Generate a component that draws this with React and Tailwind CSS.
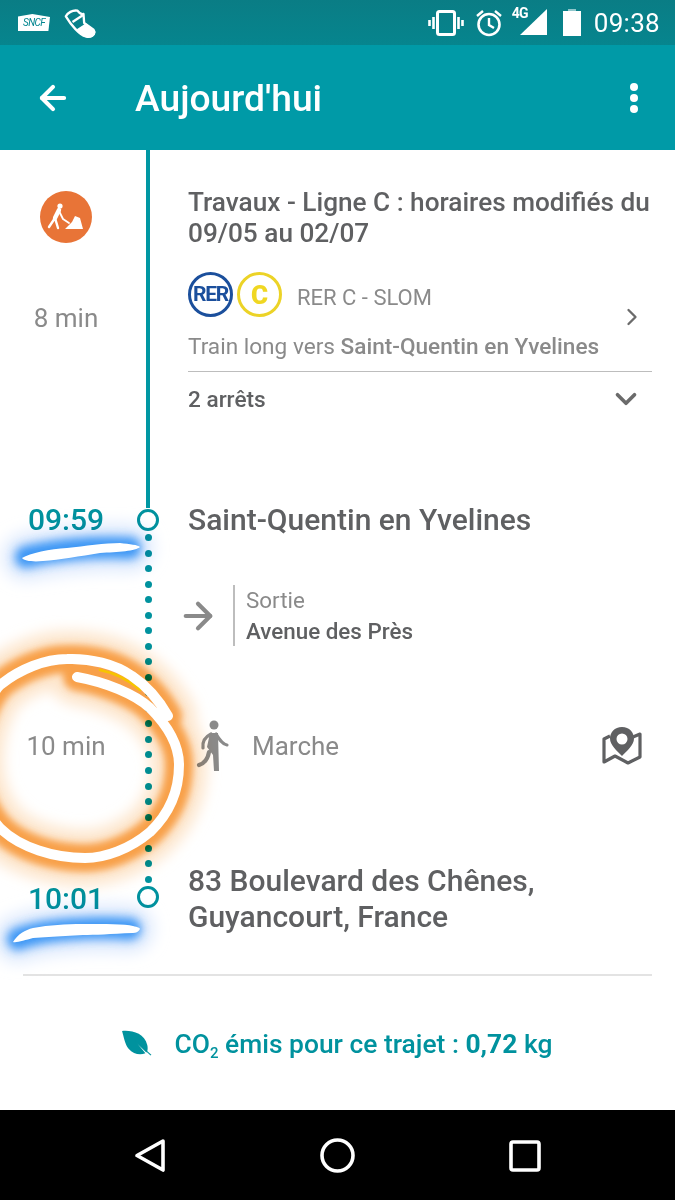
import { ArrowLeft, ArrowRight, ChevronDown, ChevronRight } from 'lucide-react';

const font = { fontFamily: 'Roboto, sans-serif' };

const ringPath = 'M77 677 C105 682 135 694 150 708 C168 726 179 745 179 765 C179 790 170 813 150 832 C130 849 105 858 85 858 C55 858 20 848 0 828 C-18 808 -25 785 -25 760 C-25 730 -15 702 0 685 C20 669 45 659 67 659 C90 658 115 664 132 676 C150 688 160 702 168 716';

const StatusIcons = () => (
  <div className="flex items-center">
    <svg width="36" height="28" viewBox="0 0 36 28" fill="none" className="mr-[11px]">
      <rect x="9.5" y="2.5" width="17" height="23" rx="2" stroke="white" strokeWidth="3" />
      <path d="M5.5 8v12M1.5 11v6M30.5 8v12M34.5 11v6" stroke="white" strokeWidth="2.6" />
    </svg>
    <svg width="28" height="28" viewBox="0 0 28 28" fill="none" className="mr-[11px]">
      <circle cx="14" cy="15.5" r="10.5" stroke="white" strokeWidth="2.6" />
      <path d="M14 9v7l5 3M2 7l6-5M26 7l-6-5" stroke="white" strokeWidth="2.4" />
    </svg>
    <div className="relative w-[34px] h-[28px] mr-[15px]">
      <svg width="34" height="28" viewBox="0 0 34 28" className="absolute left-[6px] top-0">
        <path d="M0 26 L27 0 V26 Z" fill="white" />
      </svg>
      <span className="absolute -left-[2px] -top-[3px] text-white text-[14px] font-bold leading-[14px] tracking-[-0.8px]">4G</span>
    </div>
    <svg width="18" height="27" viewBox="0 0 18 27" className="mr-[13px]">
      <rect x="5" y="0" width="8" height="3" fill="#8fc6cb" />
      <rect x="0" y="2" width="18" height="25" fill="white" />
    </svg>
    <span className="text-white text-[26px] leading-none tracking-[0.3px]">09:38</span>
  </div>
);

const LeftIcons = () => (
  <div className="flex items-center">
    <div className="relative w-[32px] h-[17px] bg-white mr-[14px] [clip-path:polygon(0_15%,45%_0,100%_18%,95%_100%,0_100%)] flex items-center justify-center">
      <span className="text-[#00858f] text-[10px] italic leading-none tracking-[-0.6px]">SNCF</span>
    </div>
    <svg width="32" height="30" viewBox="190 20 95 90" fill="none" stroke="white" strokeWidth="7" strokeLinejoin="round">
      <path d="M195 45 C200 35 215 25 230 28 C235 35 240 40 248 38 L250 65 L278 85 C285 100 270 110 255 105 C235 100 210 70 195 45 Z" />
      <path d="M215 62 L248 40" />
      <path d="M232 85 L255 70 L280 90 C283 100 270 108 255 104 Z" fill="white" />
    </svg>
  </div>
);

const WorkerBadge = () => (
  <div className="w-[52px] h-[52px] rounded-full bg-[#e87437]">
    <svg width="52" height="52" viewBox="0 0 52 52" fill="none" stroke="white" strokeLinecap="round" strokeLinejoin="round">
      <circle cx="20" cy="15" r="2.6" fill="white" stroke="none" />
      <path d="M19 19 L15 27" strokeWidth="4.4" />
      <path d="M15 27 L9 36 M15 27 L18 37" strokeWidth="2.4" />
      <path d="M19 20 L23 28 L29 32" strokeWidth="1.8" />
      <path d="M25 38 L32 31 L35 25 L40 27 L43 38 Z" fill="white" stroke="none" />
    </svg>
  </div>
);

const LineBadges = () => (
  <div className="flex items-center gap-[4px]">
    <div className="w-[45px] h-[45px] rounded-full border-[3px] border-[#1b4f9c] flex items-center justify-center">
      <span className="text-[#1b4f9c] text-[21px] font-bold leading-none tracking-[-1.2px]">RER</span>
    </div>
    <div className="w-[45px] h-[45px] rounded-full border-[3px] border-[#ecd327] flex items-center justify-center">
      <span className="text-[#f0d722] text-[26px] font-black leading-none">C</span>
    </div>
  </div>
);

const WalkIcon = () => (
  <svg width="34" height="54" viewBox="0 0 34 54" fill="none" stroke="#8a8a8a" strokeLinecap="round" strokeLinejoin="round">
    <circle cx="18" cy="6" r="4.5" fill="#8a8a8a" stroke="none" />
    <path d="M14 14 L22 14 L23 52 L18 52 L17 36 L11 28 Z" fill="#8a8a8a" stroke="none" />
    <path d="M15 15 C9 18 6 22 7 29" strokeWidth="3.2" />
    <path d="M20 15 C23 20 26 25 31 26" strokeWidth="3.2" />
    <path d="M13 33 C12 39 9 44 3 46" strokeWidth="4.2" />
  </svg>
);

const MapPinIcon = () => (
  <svg width="40" height="38" viewBox="0 0 40 38" fill="none">
    <path d="M8 9 L2 12 V35 L13 29 L26 36 L38 30 V7 L31 10" stroke="#5f6062" strokeWidth="3.2" strokeLinejoin="round" />
    <path fillRule="evenodd" clipRule="evenodd" d="M20 0 C12.5 0 8 5.5 8 11.5 C8 18 15 24 20 29 C25 24 32 18 32 11.5 C32 5.5 27.5 0 20 0 Z M20 6.5 A5.5 5.5 0 1 0 20 17.5 A5.5 5.5 0 1 0 20 6.5 Z" fill="#5f6062" />
  </svg>
);

const LeafIcon = () => (
  <svg width="30" height="28" viewBox="0 0 32 30">
    <path d="M0 1 C10 0 24 3 27 16 C28 21 27 23 26 24 L16 14 L25 25 C19 27 12 26 7 20 C3 15 2 8 0 1 Z" fill="#00929e" />
    <path d="M14 12 L31 27" stroke="#00929e" strokeWidth="1.2" />
  </svg>
);

const Scribbles = () => (
  <svg width="675" height="1200" viewBox="0 0 675 1200" fill="none" className="absolute left-0 top-0 pointer-events-none">
    <defs>
      <filter id="blurWide" filterUnits="userSpaceOnUse" x="-100" y="400" width="500" height="700"><feGaussianBlur stdDeviation="7" /></filter>
      <filter id="blurNarrow" filterUnits="userSpaceOnUse" x="-100" y="400" width="500" height="700"><feGaussianBlur stdDeviation="3.5" /></filter>
      <filter id="blueWide" filterUnits="userSpaceOnUse" x="-100" y="400" width="500" height="700"><feGaussianBlur stdDeviation="8" /></filter>
      <filter id="blueNarrow" filterUnits="userSpaceOnUse" x="-100" y="400" width="500" height="700"><feGaussianBlur stdDeviation="5" /></filter>
    </defs>

    {/* underline 09:59 */}
    <g className="mix-blend-multiply">
      <path d="M26 557 C50 551 90 546 130 548" stroke="#dbe8fd" strokeWidth="46" strokeLinecap="round" filter="url(#blueWide)" />
      <path d="M26 557 C50 551 90 546 130 548" stroke="#3d97f5" strokeWidth="22" strokeLinecap="round" filter="url(#blueNarrow)" />
    </g>
    <path d="M22 558 C30 553 50 549 67 548 C85 546 105 543 120 543 C130 544 138 545 140 547 C136 551 118 552 100 553 C80 556 60 560 43 561 C33 562 24 561 22 558 Z" fill="white" />

    {/* underline 10:01 */}
    <g className="mix-blend-multiply">
      <path d="M18 939 C40 930 90 926 130 929" stroke="#dbe8fd" strokeWidth="46" strokeLinecap="round" filter="url(#blueWide)" />
      <path d="M18 939 C40 930 90 926 130 929" stroke="#3d97f5" strokeWidth="22" strokeLinecap="round" filter="url(#blueNarrow)" />
    </g>
    <path d="M13 942 C18 934 25 930 33 928 C50 925 65 924 83 924 C105 924 125 924 133 926 C138 927 140 928 140 929 C138 932 136 933 133 933 C110 934 95 935 83 935 C65 936 48 937 33 938 C25 940 17 943 13 942 Z" fill="white" />

    {/* ring round 10 min */}
    <g className="mix-blend-multiply">
      <path d={ringPath} stroke="#fde6cd" strokeWidth="56" strokeLinecap="round" filter="url(#blurWide)" />
      <path d={ringPath} stroke="#f8a04a" strokeWidth="28" strokeLinecap="round" filter="url(#blurNarrow)" />
    </g>
    <path d="M100 670 C115 673 130 681 140 690" stroke="#f6c400" strokeWidth="2.5" strokeLinecap="round" />
    <path d={ringPath} stroke="white" strokeWidth="10" strokeLinecap="round" />
  </svg>
);

const App = () => {
  return (
    <div className="relative w-[675px] h-[1200px] overflow-hidden bg-white flex flex-col" style={font}>
      {/* status bar */}
      <div className="h-[45px] bg-gradient-to-b from-[#0a7d85] to-[#06858e] flex items-center justify-between pl-[18px] pr-[15px]">
        <LeftIcons />
        <StatusIcons />
      </div>

      {/* app bar */}
      <div className="h-[105px] bg-[#009aa7] flex items-center text-white">
        <ArrowLeft size={38} strokeWidth={2.6} className="ml-[34px]" />
        <h1 className="ml-[63px] mt-[2px] text-[37.2px] font-medium leading-none whitespace-nowrap">Aujourd'hui</h1>
        <div className="ml-auto mr-[37px] flex flex-col gap-[3px]">
          <div className="w-[8px] h-[8px] rounded-full bg-white" />
          <div className="w-[8px] h-[8px] rounded-full bg-white" />
          <div className="w-[8px] h-[8px] rounded-full bg-white" />
        </div>
      </div>

      {/* journey */}
      <div className="flex-1 flex flex-col">
        {/* train leg */}
        <div className="h-[358px] flex">
          <div className="w-[132px] flex flex-col items-center pt-[41px]">
            <WorkerBadge />
            <span className="mt-[60px] text-[26px] leading-[30px] text-[#8a8a8a]">8 min</span>
          </div>
          <div className="w-[32px] flex justify-center">
            <div className="w-[4px] h-full bg-[#0097a3]" />
          </div>
          <div className="flex-1 pl-[24px] pr-[23px] pt-[37px]">
            <p className="text-[26.2px] font-medium leading-[31px] text-[#5f6062] whitespace-nowrap">Travaux - Ligne C : horaires modifiés du</p>
            <p className="text-[26.2px] font-medium leading-[31px] text-[#5f6062]">09/05 au 02/07</p>
            <div className="mt-[23px] flex items-center">
              <LineBadges />
              <span className="ml-[15px] mt-[7px] text-[22px] leading-none text-[#8a8a8a]">RER C - SLOM</span>
            </div>
            <div className="mt-[12px] flex items-center justify-between pb-[6px] border-b border-[#bdbdbd]">
              <p className="text-[22.6px] leading-[36px] text-[#8a8a8a] whitespace-nowrap">
                Train long vers <span className="font-medium">Saint-Quentin en Yvelines</span>
              </p>
            </div>
            <div className="flex items-center justify-between h-[55px]">
              <span className="text-[22.6px] font-medium text-[#5f6062]">2 arrêts</span>
              <ChevronDown size={34} strokeWidth={2.6} className="text-[#6b6b6b] mr-[9px] -mt-[2px]" />
            </div>
          </div>
        </div>

        {/* Saint-Quentin stop */}
        <div className="h-[24px] flex items-center">
          <span className="w-[132px] text-center text-[30px] font-medium leading-none text-[#00929e]">09:59</span>
          <div className="w-[32px] flex justify-center">
            <div className="w-[22px] h-[22px] rounded-full border-[3px] border-[#00929e]" />
          </div>
          <span className="pl-[24px] text-[30px] font-medium leading-none text-[#5f6062] whitespace-nowrap">Saint-Quentin en Yvelines</span>
        </div>

        {/* walking leg */}
        <div className="h-[353px] flex">
          <div className="w-[132px] flex flex-col items-center pt-[199px]">
            <span className="text-[26px] leading-[30px] text-[#8a8a8a]">10 min</span>
          </div>
          <div className="w-[32px] flex flex-col items-center justify-between pt-[2px] pb-[2px]">
            {Array.from({ length: 23 }).map((_, i) => (
              <div key={i} className="w-[7px] h-[7px] rounded-full bg-[#00929e]" />
            ))}
          </div>
          <div className="flex-1 pl-[24px] pr-[33px] pt-[53px]">
            <div className="flex items-center h-[61px]">
              <ArrowRight size={42} strokeWidth={2.4} className="text-[#8a8a8a] -ml-[11px] mr-[1px] shrink-0" />
              <div className="ml-[13px] pl-[11px] border-l-2 border-[#bdbdbd] h-[61px] flex flex-col justify-center">
                <span className="text-[22.4px] leading-[31px] text-[#8a8a8a]">Sortie</span>
                <span className="text-[22.4px] leading-[31px] font-medium text-[#5f6062] whitespace-nowrap">Avenue des Près</span>
              </div>
            </div>
            <div className="mt-[73px] flex items-center pl-[8px]">
              <WalkIcon />
              <span className="ml-[22px] text-[26px] leading-none text-[#8a8a8a]">Marche</span>
              <div className="ml-auto"><MapPinIcon /></div>
            </div>
          </div>
        </div>

        {/* destination */}
        <div className="h-[24px] flex items-center">
          <span className="w-[132px] text-center text-[30px] font-medium leading-none text-[#00929e] mt-[4px]">10:01</span>
          <div className="w-[32px] flex justify-center">
            <div className="w-[22px] h-[22px] rounded-full border-[3px] border-[#00929e]" />
          </div>
          <p className="pl-[24px] mt-[4px] text-[30px] font-medium leading-[36px] text-[#5f6062] whitespace-nowrap">
            83 Boulevard des Chênes,<br />Guyancourt, France
          </p>
        </div>

        {/* footer */}
        <div className="mx-[23px] mt-[65px] border-t-2 border-[#e3e3e3]" />
        <div className="flex-1 flex items-center justify-center pt-[2px] gap-[23px] pr-[1px]">
          <LeafIcon />
          <p className="text-[26.4px] font-medium text-[#00929e] leading-none whitespace-nowrap">
            CO<sub className="text-[15px] align-baseline relative top-[5px]">2</sub> émis pour ce trajet : <span className="font-bold">0,72</span> kg
          </p>
        </div>
      </div>

      {/* nav bar */}
      <div className="h-[90px] bg-black flex items-center">
        <svg width="675" height="90" viewBox="0 0 675 90" fill="none" stroke="white" strokeWidth="3.6">
          <path d="M163 31 L137 45.5 L163 60 Z" strokeLinejoin="round" />
          <circle cx="337.5" cy="45.5" r="15.5" />
          <rect x="511" y="32" width="28" height="28" rx="2" />
        </svg>
      </div>

      <ChevronRight size={28} strokeWidth={2} className="absolute left-[618px] top-[303px] text-[#6b6b6b]" />
      <Scribbles />
    </div>
  );
};

export default App;
